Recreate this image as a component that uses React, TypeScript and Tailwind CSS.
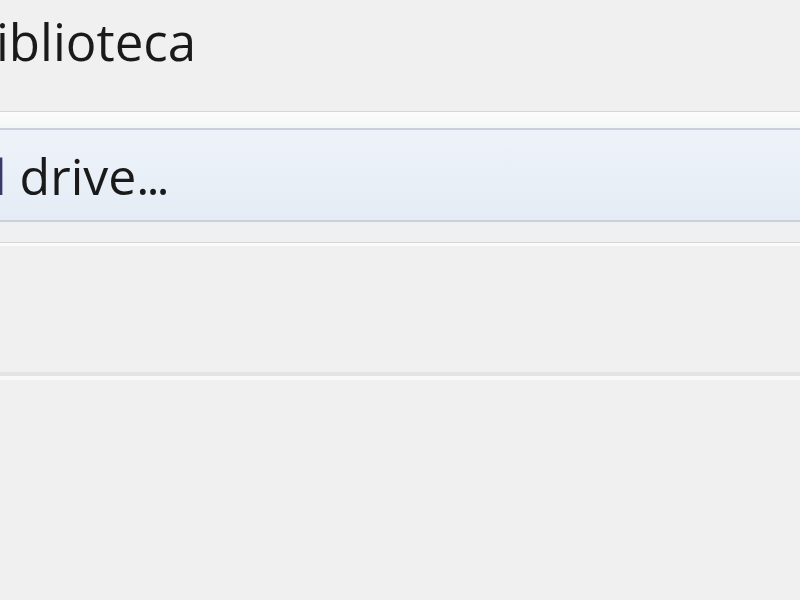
export default function App() {
  return (
    <div
      className="w-[800px] h-[600px] overflow-hidden bg-[#f0f0f0] flex flex-col text-[#1a1a1a]"
      style={{ fontFamily: '"Open Sans", "Noto Sans", sans-serif' }}
    >
      {/* previous item, clipped */}
      <div className="h-[111px] flex items-start">
        <span className="text-[51px] font-medium leading-none -ml-[4px] mt-[16px] whitespace-nowrap">iblioteca</span>
      </div>

      {/* separator + top of hovered item */}
      <div className="h-px bg-[#d6d6d6]" />
      <div className="h-[16px] bg-gradient-to-b from-[#fcfcfc] to-[#f5f6f7]" />

      {/* hovered menu item */}
      <div className="h-[94px] border-y-2 border-[#c8d1db] bg-gradient-to-b from-[#eef3f9] to-[#e5ecf5] flex items-start overflow-hidden">
        <span className="text-[50px] font-medium leading-none -ml-[6px] mt-[21px] whitespace-nowrap">
          <span className="text-[#3a3a6a]">l</span> drive<span className="tracking-[-3px]">...</span>
        </span>
      </div>

      <div className="h-[20px] bg-gradient-to-b from-[#eef0f3] to-[#f0f0f0]" />
      <div className="h-px bg-[#d6d6d6]" />
      <div className="h-[3px] bg-[#fafafa]" />

      <div className="h-[126px]" />

      {/* lower separator */}
      <div className="h-[4px] bg-[#e4e4e4]" />
      <div className="h-[4px] bg-[#f9f9f9]" />
      <div className="flex-1" />
    </div>
  );
}
